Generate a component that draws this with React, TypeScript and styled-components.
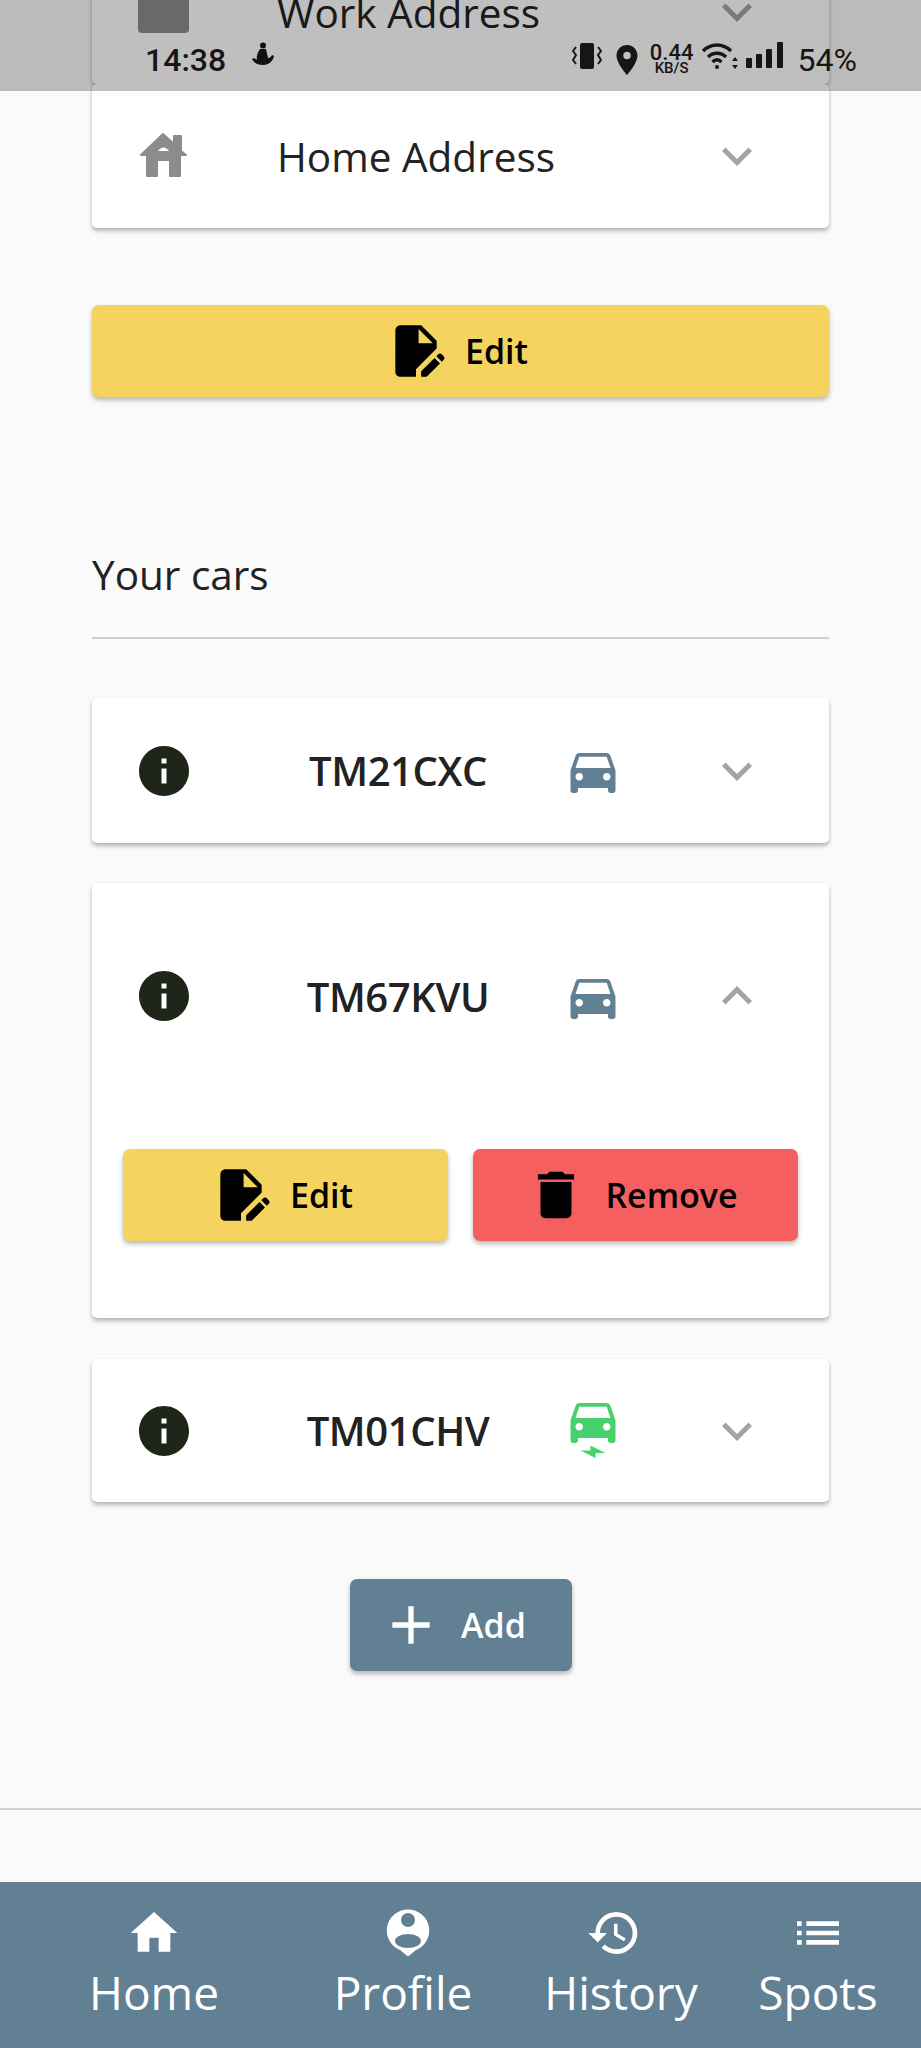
import React from "react";
import styled, { createGlobalStyle } from "styled-components";
import {
  MdAdd,
  MdDelete,
  MdDirectionsCar,
  MdEditDocument,
  MdElectricCar,
  MdExpandLess,
  MdExpandMore,
  MdHistory,
  MdHome,
  MdInfo,
  MdList,
  MdLocationOn,
} from "react-icons/md";

const GlobalStyle = createGlobalStyle`
  html, body {
    margin: 0;
    padding: 0;
    background: #fafafa;
    overflow: hidden;
  }
  body {
    font-family: "Open Sans", "Noto Sans", sans-serif;
    color: #222;
  }
`;

const Screen = styled.div`
  position: relative;
  width: 921px;
  height: 2048px;
  overflow: hidden;
  background: #fafafa;
`;

const StatusOverlay = styled.div`
  position: absolute;
  top: 0;
  left: 0;
  right: 0;
  height: 91px;
  background: rgba(0, 0, 0, 0.25);
  display: flex;
  align-items: flex-start;
  padding: 42px 64px 0 145px;
  box-sizing: border-box;
  font-family: Roboto, sans-serif;
  font-size: 32px;
  line-height: 36px;
  color: #161616;
`;

const StatusTime = styled.span`
  width: 107px;
  font-weight: 500;
`;

const StatusRight = styled.div`
  margin-left: auto;
  display: flex;
  align-items: flex-start;
  gap: 7px;
`;

const NetSpeed = styled.div`
  width: 44px;
  display: flex;
  flex-direction: column;
  align-items: center;
  font-size: 22px;
  line-height: 18px;
  font-weight: 500;
  margin: 2px 0 0 -2px;

  small {
    font-size: 15px;
    line-height: 12px;
  }
`;

const Battery = styled.span`
  margin-left: 8px;
`;

const Content = styled.main`
  margin-top: -60px;
  padding: 0 92px;
  display: flex;
  flex-direction: column;
`;

const Card = styled.section<{ $mb?: number }>`
  background: #fff;
  border-radius: 5px;
  box-shadow: 0 3px 4px rgba(0, 0, 0, 0.28), 0 0 2px rgba(0, 0, 0, 0.06);
  margin-bottom: ${(p) => p.$mb ?? 0}px;
`;

const AddressRow = styled.div`
  height: 144px;
  display: grid;
  grid-template-columns: 60px 1fr 60px;
  align-items: center;
  padding: 0 62px 0 42px;
  font-size: 40.5px;
  font-weight: 400;
`;

const AddressLabel = styled.span`
  padding-left: 83px;
  color: #222;
`;

const CarRow = styled.div<{ $height: number }>`
  height: ${(p) => p.$height}px;
  display: grid;
  grid-template-columns: 60px 369px 60px 1fr;
  align-items: center;
  padding: 0 62px 0 42px;
`;

const Plate = styled.span`
  padding-left: 39px;
  text-align: center;
  font-size: 40px;
  font-weight: 600;
  letter-spacing: -0.4px;
  color: #222;
`;

const IconSlot = styled.span<{ $color?: string; $size?: number }>`
  display: flex;
  align-items: center;
  justify-content: center;
  color: ${(p) => p.$color ?? "#000"};
  font-size: ${(p) => p.$size ?? 60}px;
`;

const Chevron = styled(IconSlot)`
  justify-self: end;
  color: #a3a3a3;
`;

const Button = styled.button<{ $bg: string; $fg?: string }>`
  height: 92px;
  border: 0;
  border-radius: 7px;
  background: ${(p) => p.$bg};
  color: ${(p) => p.$fg ?? "#000"};
  box-shadow: 0 3px 5px rgba(0, 0, 0, 0.28);
  display: flex;
  align-items: center;
  justify-content: center;
  gap: 18px;
  padding: 0 8px 0 0;
  font-family: inherit;
  font-size: 34px;
  font-weight: 600;
`;

const FullButton = styled(Button)`
  width: 100%;
`;

const AddButton = styled(Button)`
  width: 222px;
  align-self: center;
  margin-top: 77px;
  padding: 0 16px 0 0;
`;

const SectionTitle = styled.h2`
  margin: 150px 0 0;
  font-size: 40.5px;
  line-height: 56px;
  font-weight: 400;
  color: #222;
`;

const Rule = styled.hr`
  width: 100%;
  height: 2px;
  margin: 34px 0 59px;
  border: 0;
  background: #cfcfcf;
`;

const ActionRow = styled.div`
  display: grid;
  grid-template-columns: 1fr 1fr;
  gap: 25px;
  padding: 40px 31px 77px;
`;

const PageRule = styled.hr`
  height: 2px;
  margin: 137px 0 0;
  border: 0;
  background: #cfcfcf;
`;

const BottomNav = styled.nav`
  position: absolute;
  left: 0;
  right: 0;
  bottom: 0;
  height: 166px;
  background: #628093;
  display: grid;
  grid-template-columns: 308px 190px 246px 148px;
  color: #fff;
`;

const NavItem = styled.div<{ $shift?: number }>`
  display: flex;
  flex-direction: column;
  align-items: center;
  padding-top: 23px;
  font-size: 46px;
  font-weight: 400;
  line-height: 62px;

  svg {
    display: block;
    font-size: 56px;
    transform: translateX(${(p) => p.$shift ?? 0}px);
  }
`;

// tile of the work address row, only its lower part shows under the status bar
const WorkIcon = () => (
  <svg width="60" height="60" viewBox="0 0 60 60" fill="currentColor" style={{ overflow: "visible" }}>
    <rect x="4" y="-10" width="51" height="61" rx="4" />
  </svg>
);

const HouseIcon = () => (
  <svg width="60" height="60" viewBox="0 0 60 60" fill="currentColor" stroke="currentColor" strokeWidth="2" strokeLinejoin="round" fillRule="evenodd">
    <path d="M29 8L40 18V10H47V25L52 29H46V50H36V34H23V50H13V29H7ZM22 26Q29.500 15 37 26Z" />
  </svg>
);

const ProfileIcon = () => (
  <svg width="56" height="56" viewBox="0 0 56 56" fill="currentColor" fillRule="evenodd">
    <path d="M28 4.500a21 21 0 0 1 8 40.500L28 51.500 20 45A21 21 0 0 1 28 4.500ZM28 8a7 7 0 1 0 0 14a7 7 0 0 0 0-14ZM28 29c-7 0-13 3-13 7s6 7 13 7 13-3 13-7-6-7-13-7Z" />
  </svg>
);

const VibrateIcon = () => (
  <svg width="30" height="28" viewBox="0 0 30 28" fill="#161616">
    <rect x="8" y="1" width="14" height="26" rx="2" />
    <path d="M4 5l-3 4 3 4-3 5 3 4" fill="none" stroke="#161616" strokeWidth="2" />
    <path d="M26 5l3 4-3 4 3 5-3 4" fill="none" stroke="#161616" strokeWidth="2" />
  </svg>
);

const WifiIcon = () => (
  <svg width="38" height="28" viewBox="0 0 38 28" fill="none" stroke="#161616" strokeWidth="3.4">
    <path d="M2 9c8-8 20-8 28 0" />
    <path d="M7 15c5-5 13-5 18 0" />
    <path d="M11.500 20c3-3 6-3 9 0" />
    <circle cx="16" cy="25" r="2" fill="#161616" stroke="none" />
    <path d="M34 15l-3 4h6zM34 27l-3-4h6z" fill="#161616" stroke="none" />
  </svg>
);

const SignalIcon = () => (
  <svg width="37" height="26" viewBox="0 0 37 26" fill="#161616">
    <rect x="0" y="16" width="6" height="10" rx="1" />
    <rect x="10" y="12" width="6" height="14" rx="1" />
    <rect x="20" y="7" width="6" height="19" rx="1" />
    <rect x="31" y="0" width="6" height="26" rx="1" />
  </svg>
);

const NotifyIcon = () => (
  <svg width="22" height="24" viewBox="0 0 22 24" fill="#111">
    <circle cx="11" cy="3.500" r="3" />
    <path d="M8 7h6l2 9c2 0 3-1 4-3l2 1c-1 5-5 9-11 9-5 0-9-2-11-6l2-1 3 2c-1-4 1-8 3-11z" />
  </svg>
);

export default function App() {
  return (
    <Screen>
      <GlobalStyle />
      <Content>
        <Card>
          <AddressRow>
            <IconSlot $color="#8c8c8c"><WorkIcon /></IconSlot>
            <AddressLabel>Work Address</AddressLabel>
            <Chevron><MdExpandMore /></Chevron>
          </AddressRow>
        </Card>
        <Card $mb={77}>
          <AddressRow>
            <IconSlot $color="#8c8c8c"><HouseIcon /></IconSlot>
            <AddressLabel>Home Address</AddressLabel>
            <Chevron><MdExpandMore /></Chevron>
          </AddressRow>
        </Card>

        <FullButton $bg="#f4d35e">
          <IconSlot $size={62}><MdEditDocument /></IconSlot>
          Edit
        </FullButton>

        <SectionTitle>Your cars</SectionTitle>
        <Rule />

        <Card $mb={40}>
          <CarRow $height={145}>
            <IconSlot $color="#1f2518"><MdInfo /></IconSlot>
            <Plate>TM21CXC</Plate>
            <IconSlot $color="#628093" $size={63}><MdDirectionsCar /></IconSlot>
            <Chevron><MdExpandMore /></Chevron>
          </CarRow>
        </Card>

        <Card $mb={41}>
          <CarRow $height={226}>
            <IconSlot $color="#1f2518"><MdInfo /></IconSlot>
            <Plate>TM67KVU</Plate>
            <IconSlot $color="#628093" $size={63}><MdDirectionsCar /></IconSlot>
            <Chevron><MdExpandLess /></Chevron>
          </CarRow>
          <ActionRow>
            <Button $bg="#f4d35e">
              <IconSlot $size={62}><MdEditDocument /></IconSlot>
              Edit
            </Button>
            <Button $bg="#f65f5f">
              <IconSlot $size={62}><MdDelete /></IconSlot>
              Remove
            </Button>
          </ActionRow>
        </Card>

        <Card>
          <CarRow $height={143}>
            <IconSlot $color="#1f2518"><MdInfo /></IconSlot>
            <Plate>TM01CHV</Plate>
            <IconSlot $color="#47d16c" $size={63}><MdElectricCar /></IconSlot>
            <Chevron><MdExpandMore /></Chevron>
          </CarRow>
        </Card>

        <AddButton $bg="#628093" $fg="#fff">
          <IconSlot $color="#fff" $size={64}><MdAdd /></IconSlot>
          Add
        </AddButton>
      </Content>
      <PageRule />

      <BottomNav>
        <NavItem><MdHome />Home</NavItem>
        <NavItem $shift={5}><ProfileIcon />Profile</NavItem>
        <NavItem $shift={-7}><MdHistory />History</NavItem>
        <NavItem><MdList />Spots</NavItem>
      </BottomNav>

      <StatusOverlay>
        <StatusTime>14:38</StatusTime>
        <NotifyIcon />
        <StatusRight>
          <VibrateIcon />
          <IconSlot $color="#161616" $size={36}><MdLocationOn /></IconSlot>
          <NetSpeed>
            0.44
            <small>KB/S</small>
          </NetSpeed>
          <WifiIcon />
          <SignalIcon />
          <Battery>54%</Battery>
        </StatusRight>
      </StatusOverlay>
    </Screen>
  );
}
